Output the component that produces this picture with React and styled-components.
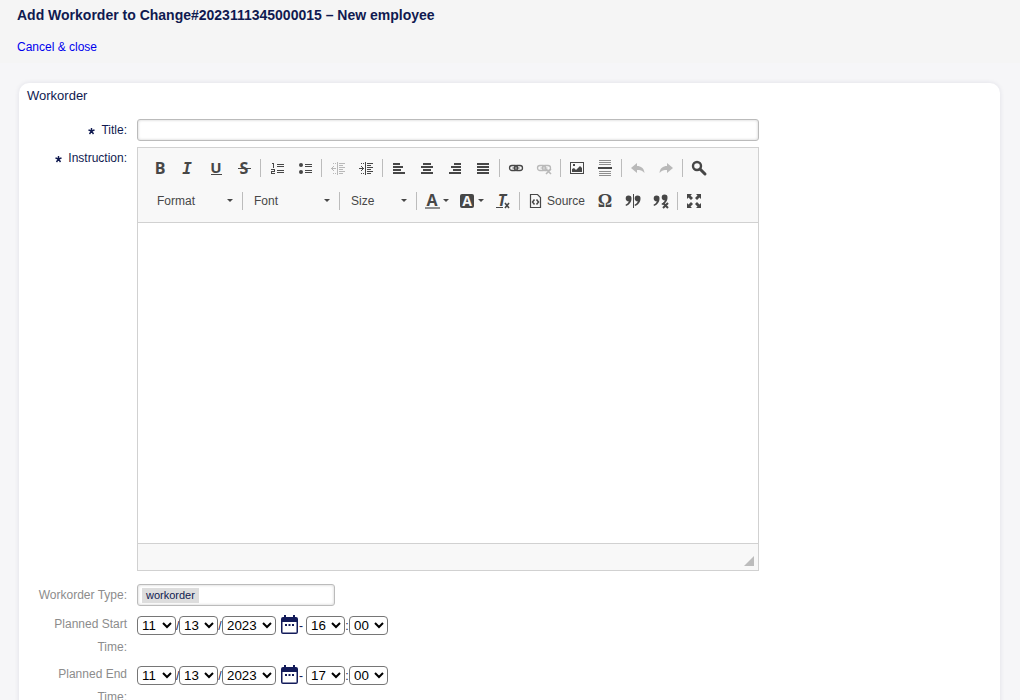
import React from 'react';

import styled, { createGlobalStyle } from 'styled-components';

const GlobalStyle = createGlobalStyle`
  * {
    box-sizing: border-box;
  }

  body {
    margin: 0;
    background: #f6f6f8;
    color: #101a50;
    font-family: "Liberation Sans", Arial, sans-serif;
    font-size: 12px;
  }
`

const Header = styled.header`
  height: 63px;
  padding: 7px 17px 0;
  background: #f5f5f5;

  h1 {
    margin: 0 0 15px;
    font-size: 14px;
    line-height: 17px;
  }

  a {
    display: inline-block;
    line-height: 16px;
    color: #0000ee;
    text-decoration: none;
  }
`

const Card = styled.main`
  margin: 20px 20px 20px 19px;
  padding: 4px 8px 20px;
  background: #fff;
  border-radius: 10px;
  box-shadow: 0 0 5px rgba(30, 30, 80, .1);

  h2 {
    margin: 0 0 14px;
    font-size: 13px;
    font-weight: normal;
    line-height: 18px;
  }
`

const Row = styled.div`
  display: grid;
  grid-template-columns: 100px minmax(0, 1fr);
  column-gap: 10px;
  margin-bottom: ${props => props.$gap || 4}px;
`

const Label = styled.label`
  line-height: 23px;
  text-align: right;
  color: ${props => (props.$muted ? '#8c8c8c' : 'inherit')};

  svg {
    margin-right: 6px;
    vertical-align: -1px;
  }
`

const TextInput = styled.input`
  width: 100%;
  max-width: 622px;
  height: 22px;
  padding: 0 4px;
  border: 1px solid #bbb;
  border-radius: 3px;
  box-shadow: inset 0 0 3px rgba(0, 0, 0, .2);
  font: inherit;
`

const TypeField = styled.button`
  width: 198px;
  height: 22px;
  padding: 0 4px;
  border: 1px solid #bbb;
  border-radius: 3px;
  background: #fff;
  box-shadow: inset 0 0 3px rgba(0, 0, 0, .2);
  display: flex;
  align-items: center;

  span {
    padding: 0 4px;
    background: #ddd;
    color: #101a50;
    font-size: 11px;
    line-height: 15px;
    font-family: "Liberation Sans", Arial, sans-serif;
  }
`

const Editor = styled.div`
  max-width: 622px;
  border: 1px solid #d1d1d1;
`

const Toolbar = styled.div`
  padding: 8px 8px 9px;
  background: #f8f8f8;
  border-bottom: 1px solid #d1d1d1;
`

const ToolRow = styled.div`
  display: flex;
  align-items: center;
  height: 24px;

  & + & {
    margin-top: 9px;
    padding-left: 2px;
  }
`

const Tool = styled.button`
  flex: none;
  width: ${props => props.$width || 28}px;
  height: 24px;
  padding: 0 6px;
  border: 0;
  background: none;
  color: #474747;
  display: flex;
  align-items: center;
  gap: ${props => props.$space || 2}px;
  font-family: inherit;
  font-size: 12px;

  &:disabled {
    opacity: .35;
  }

  svg {
    flex: none;
    overflow: visible;
  }
`

const Combo = styled(Tool)`
  justify-content: space-between;
  padding: 0 7px 0 9px;
`

const Separator = styled.span`
  flex: none;
  width: 1px;
  height: 18px;
  margin: 0 2px;
  background: #bcbcbc;
`

const Content = styled.textarea`
  display: block;
  width: 100%;
  height: 320px;
  padding: 20px;
  border: 0;
  outline: 0;
  resize: none;
  font: inherit;
`

const Footer = styled.div`
  display: flex;
  justify-content: flex-end;
  align-items: flex-end;
  height: 27px;
  padding: 4px;
  background: #f8f8f8;
  border-top: 1px solid #d1d1d1;
`

const DateLine = styled.div`
  display: flex;
  align-items: center;
  height: 25px;
`

const Select = styled.select`
  width: ${props => (props.$wide ? 54 : 39)}px;
  height: 19px;
  padding: 0;
  border: 1px solid #767676;
  border-radius: 4px;
  background-color: #fff;
  color: #000;
  font-family: inherit;
`

const Mark = styled.span`
  width: ${props => props.$width}px;
  text-align: center;
`

const CalendarButton = styled.button`
  width: 18px;
  height: 20px;
  margin: 0 0 2px 5px;
  padding: 0;
  border: 0;
  background: none;
  color: #131b5a;

  svg {
    display: block;
  }
`

const Icon = ({ children, width = 16, ...rest }) => (
  <svg width={width} height="16" viewBox={`0 0 ${width} 16`} fill="currentColor" aria-hidden="true" {...rest}>
    {children}
  </svg>
);

const glyph = {
  fontFamily: '"Open Sans", "Noto Sans", sans-serif',
  fontWeight: 700,
  fontSize: 16,
  textAnchor: 'middle'
};

const slab = {
  fontFamily: '"DejaVu Sans Mono", monospace',
  fontWeight: 700,
  fontStyle: 'italic',
  fontSize: 16,
  textAnchor: 'middle'
};

const smallX = <path d="M10 9l5 5M15 9l-5 5" stroke="currentColor" strokeWidth="1.6" />;
const quote = 'M3.500 2.500a3 3 0 0 1 3 3.200C6.500 9 4 12 1 13l-.5-1.200C2.300 11 3.500 9.800 3.700 8.300A2.900 2.900 0 0 1 3.500 2.500z';
const chain = (
  <g fill="none" stroke="currentColor">
    <rect x="1.500" y="5.500" width="8" height="5" rx="2.500" strokeWidth="1.300" />
    <rect x="6.500" y="5.500" width="8" height="5" rx="2.500" strokeWidth="1.300" />
    <path d="M4.500 8h7" />
  </g>
);

const icons = {
  bold: <text x="8" y="14" {...glyph}>B</text>,
  italic: <text x="7" y="14" {...slab}>I</text>,
  underline: <><text x="8" y="13" {...glyph} fontSize="15">U</text><path d="M3 14h11v1H3z" /></>,
  strike: <><text x="8" y="14" {...glyph}>S</text><path d="M2 8h13v1H2z" /></>,
  numbered: (
    <g shapeRendering="crispEdges">
      <path d="M8 4h7v1H8zM8 6h7v1H8zM8 10h7v1H8zM8 12h7v1H8z" />
      <path d="M3 3h2v5H4V4H3zM2 9h4v3H3v1h3v1H2v-3h3v-1H2z" />
    </g>
  ),
  bulleted: <><circle cx="4" cy="5" r="2" /><circle cx="4" cy="12" r="2" /><path d="M8 4h7v1H8zM8 6h7v1H8zM8 10h7v1H8zM8 12h7v1H8z" /></>,
  outdent: (
    <g shapeRendering="crispEdges">
      <path d="M7 2h1v13H7zM9 3h6v1H9zM9 5h4v1H9zM9 7h6v1H9zM9 9h4v1H9zM9 11h6v1H9zM9 13h4v1H9z" />
      <path d="M3 3h1v1H3zM5 3h1v1H5zM3 13h1v1H3zM5 13h1v1H5zM1 8h5v1H1zM2 7h1v3H2zM3 6h1v1H3zM3 10h1v1H3z" />
    </g>
  ),
  indent: (
    <g shapeRendering="crispEdges">
      <path d="M7 2h1v13H7zM9 3h6v1H9zM9 5h4v1H9zM9 7h6v1H9zM9 9h4v1H9zM9 11h6v1H9zM9 13h4v1H9z" />
      <path d="M3 3h1v1H3zM5 3h1v1H5zM3 13h1v1H3zM5 13h1v1H5zM1 8h5v1H1zM4 7h1v3H4zM3 6h1v1H3zM3 10h1v1H3z" />
    </g>
  ),
  left: <path d="M2 3h7v2H2zM2 6h10v2H2zM2 9h8v2H2zM2 12h12v2H2z" />,
  center: <path d="M4 3h8v2H4zM2 6h12v2H2zM4 9h8v2H4zM2 12h12v2H2z" />,
  right: <path d="M7 3h7v2H7zM4 6h10v2H4zM6 9h8v2H6zM2 12h12v2H2z" />,
  justify: <path d="M2 3h12v2H2zM2 6h12v2H2zM2 9h12v2H2zM2 12h12v2H2z" />,
  link: chain,
  unlink: <>{chain}{smallX}</>,
  image: <path fillRule="evenodd" d="M1 2h14v12H1zM2 3v10h12V3zM3 12V9l2-1 2 2 4-4 2 2v4zM4 4h2v2H4z" />,
  rule: (
    <>
      <path opacity=".6" d="M2 0h12v1H2zM2 2h12v1H2zM2 4h12v1H2zM2 11h12v1H2zM2 13h12v1H2zM2 15h12v1H2z" />
      <path d="M1 7h14v2H1z" />
    </>
  ),
  undo: <path d="M1 8l6-5v3c4 0 7 2 7.500 7C12.500 10.500 10 10 7 10v3z" />,
  redo: <path d="M15 8L9 3v3c-4 0-7 2-7.500 7C3.500 10.500 6 10 9 10v3z" />,
  find: <><circle cx="6" cy="6" r="4" fill="none" stroke="currentColor" strokeWidth="2.400" /><path d="M9 9l5 5" stroke="currentColor" strokeWidth="3" strokeLinecap="round" /></>,
  color: <><text x="7" y="13" {...glyph} fontSize="16">A</text><path opacity=".6" d="M0 14h15v2H0z" /></>,
  background: <><rect y="1" width="14" height="14" rx="2" /><text x="7" y="13" {...glyph} fontSize="14" fill="#f8f8f8">A</text></>,
  clear: <><text x="7" y="13" {...glyph} fontSize="16" fontStyle="italic">T</text><path d="M1 14h7v1H1z" /><path d="M10 10l4 5M14 10l-4 5" stroke="currentColor" strokeWidth="1.600" /></>,
  source: (
    <g fill="none" stroke="currentColor" strokeWidth="1.200">
      <path d="M2.500 1.500h7l3 3v10h-10z" />
      <path d="M6.500 6.500L4.500 9l2 2.500M8.500 6.500l2 2.500-2 2.500" strokeWidth="1.500" />
    </g>
  ),
  omega: <text x="8" y="14" {...glyph} fontFamily='"Liberation Serif", serif' fontSize="18">Ω</text>,
  splitQuote: <><path d={quote} /><path d="M8 1h1v14H8z" /><path d={quote} transform="translate(9)" /></>,
  removeQuote: <><path d={quote} /><path d={quote} transform="translate(8 -1)" /><path d="M10 10l5 5M15 10l-5 5" stroke="currentColor" strokeWidth="2" /></>,
  maximize: <path d="M1 1h5L4.500 2.500 7 5 5 7 2.500 4.500 1 6zM15 1v5l-1.500-1.500L11 7 9 5l2.500-2.500L10 1zM1 15v-5l1.500 1.500L5 9l2 2-2.500 2.500L6 15zM15 15h-5l1.500-1.500L9 11l2-2 2.500 2.500L15 10z" />
};

const arrow = (
  <svg width="6" height="4" viewBox="0 0 6 4" fill="currentColor" aria-hidden="true">
    <path d="M0 0h6L3 3z" />
  </svg>
);

const star = (
  <svg width="7" height="8" viewBox="0 0 7 8" stroke="currentColor" strokeWidth="1.400" aria-hidden="true">
    <path d="M3.500 1v3M.5 3l3 1 3-1M1.500 7l2-3 2 3" fill="none" />
  </svg>
);

const firstRow = [
  ['bold', 'italic', 'underline', 'strike'],
  ['numbered', 'bulleted'],
  ['outdent', 'indent'],
  ['left', 'center', 'right', 'justify'],
  ['link', 'unlink'],
  ['image', 'rule'],
  ['undo', 'redo'],
  ['find']
];

const disabled = ['outdent', 'unlink', 'undo', 'redo'];

const ToolButton = ({ name }) => (
  <Tool type="button" aria-label={name} disabled={disabled.includes(name)}>
    <Icon>{icons[name]}</Icon>
  </Tool>
);

const DateTime = ({ id, hour }) => (
  <DateLine>
    <Select id={id} defaultValue="11"><option>11</option></Select>
    <Mark $width={3}>/</Mark>
    <Select aria-label="Day"><option>13</option></Select>
    <Mark $width={4}>/</Mark>
    <Select $wide aria-label="Year"><option>2023</option></Select>
    <CalendarButton type="button" aria-label="Calendar">
      <svg width="17" height="19" viewBox="0 0 17 19" fill="currentColor" aria-hidden="true">
        <path fillRule="evenodd" d="M2 2h1V0h2v2h7V0h2v2h1a2 2 0 0 1 2 2v13a2 2 0 0 1-2 2H2a2 2 0 0 1-2-2V4a2 2 0 0 1 2-2zM1.500 7v10.500h14V7z" />
        <path d="M4 9h2v2H4zM7.500 9h2v2h-2zM11 9h2v2h-2z" />
      </svg>
    </CalendarButton>
    <Mark $width={4}>-</Mark>
    <Mark $width={3} />
    <Select aria-label="Hour"><option>{hour}</option></Select>
    <Mark $width={4}>:</Mark>
    <Select aria-label="Minute"><option>00</option></Select>
  </DateLine>
);

const App = () => (
  <>
    <GlobalStyle />
    <Header>
      <h1>Add Workorder to Change#2023111345000015 – New employee</h1>
      <a href="#close">Cancel &amp; close</a>
    </Header>
    <Card>
      <h2>Workorder</h2>
      <Row $gap={5}>
        <Label htmlFor="title">{star}Title:</Label>
        <TextInput id="title" />
      </Row>
      <Row $gap={13}>
        <Label htmlFor="instruction">{star}Instruction:</Label>
        <Editor>
          <Toolbar>
            <ToolRow>
              {firstRow.map((group, i) => (
                <React.Fragment key={group[0]}>
                  {i > 0 && <Separator />}
                  {group.map(name => <ToolButton key={name} name={name} />)}
                </React.Fragment>
              ))}
            </ToolRow>
            <ToolRow>
              <Combo type="button" $width={92}>Format{arrow}</Combo>
              <Separator />
              <Combo type="button" $width={92}>Font{arrow}</Combo>
              <Separator />
              <Combo type="button" $width={72}>Size{arrow}</Combo>
              <Separator />
              <Tool type="button" $width={35} aria-label="Text color"><Icon>{icons.color}</Icon>{arrow}</Tool>
              <Tool type="button" $width={35} aria-label="Background color"><Icon>{icons.background}</Icon>{arrow}</Tool>
              <ToolButton name="clear" />
              <Separator />
              <Tool type="button" $width={69} $space={3}><Icon>{icons.source}</Icon>Source</Tool>
              <ToolButton name="omega" />
              <ToolButton name="splitQuote" />
              <ToolButton name="removeQuote" />
              <Separator />
              <ToolButton name="maximize" />
            </ToolRow>
          </Toolbar>
          <Content id="instruction" />
          <Footer>
            <svg width="10" height="10" viewBox="0 0 10 10" fill="#bcbcbc" aria-hidden="true">
              <path d="M10 0v10H0z" />
            </svg>
          </Footer>
        </Editor>
      </Row>
      <Row $gap={6}>
        <Label htmlFor="type" $muted>Workorder Type:</Label>
        <TypeField id="type" type="button"><span>workorder</span></TypeField>
      </Row>
      <Row>
        <Label htmlFor="start" $muted>Planned Start Time:</Label>
        <DateTime id="start" hour="16" />
      </Row>
      <Row>
        <Label htmlFor="end" $muted>Planned End Time:</Label>
        <DateTime id="end" hour="17" />
      </Row>
    </Card>
  </>
);

export default App;
